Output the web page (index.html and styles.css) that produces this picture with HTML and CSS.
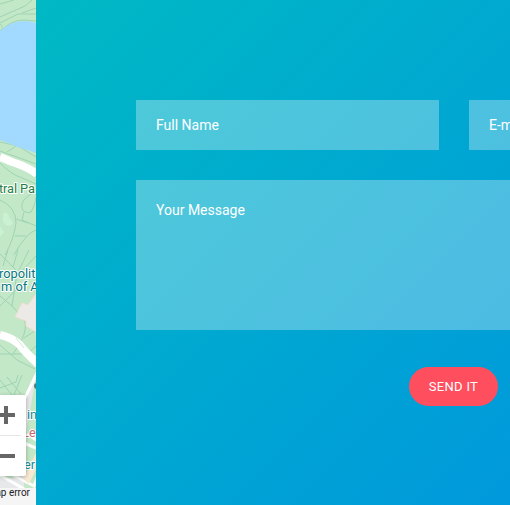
FILE: index.html
```html
<!DOCTYPE html>
<html lang="en">
<head>
<meta charset="utf-8">
<title>Contact</title>
<link rel="stylesheet" href="styles.css">
</head>
<body>
<main class="contact">
  <section class="map">
    <svg class="map-art" viewBox="0 0 36 505" width="36" height="505">
      <rect width="36" height="505" fill="#c3e8c8"/>
      <g fill="none" stroke="#9fd3b3" stroke-width="1">
        <path d="M0 4L14 0M0 17L25 6L32 0M0 23L18 14L36 14M22 13L36 8M0 24Q5 27 0 31"/>
        <path d="M0 32Q10 20 24 20L36 21M0 142L18 146L36 157M7 152L19 144M0 151L36 164M0 163Q12 175 20 177L36 184M0 200Q16 207 16 223Q14 239 5 255M31 194Q20 201 22 208Q24 214 31 212Q36 203 36 197M24 212L22 220L36 226M15 236L26 236M36 230Q26 233 14 255M16 219L28 223"/>
        <path d="M8 250L3 266M18 250L13 267M29 250L17 274L12 306L0 296M36 256L18 275M0 306L18 288M0 254L16 270M12 306L24 319Q28 327 21 342L13 354L0 354M24 338L36 330M0 345L17 360L35 369M13 354L27 354L36 346"/>
        <path d="M0 388L16 382L18 375M0 380L12 395M7 377L21 394M22 375L14 395"/>
      </g>
      <path d="M0 31Q11 21 24 21Q31 21 36 23V153L18 147L0 140Z" fill="#a2daff"/>
      <path d="M0 157L12 162Q28 167 37 174" fill="none" stroke="#fff" stroke-width="8"/>
      <path d="M3 214Q7 210 9 217L13 223Q8 229 3 222ZM0 226L4 232L0 237Z" fill="#c9f2d2"/>
      <path d="M22 303L28 305L36 294V332L26 326V321L15 317Z" fill="#ebeae7" stroke="#f2dccd"/>
      <path d="M0 335Q10 337 19 344Q25 352 38 364" fill="none" stroke="#fff" stroke-width="8"/>
      <path d="M16 338L24 348" stroke="#d6e6d8"/>
      <path d="M36 376L24 405V505H0V478H18Z" fill="#e7e8ea"/>
      <path d="M37 373L24 400M27 434L38 441M24 443L36 448M13 475L34 486L37 478M0 475L36 496" fill="none" stroke="#fff" stroke-width="3"/>
      <path d="M36 453V469L29 484L23 479Z" fill="#f8e9d3"/>
      <path d="M0 488H36V505H0Z" fill="#f5f5f5"/>
      <circle cx="37" cy="386" r="3" fill="#4c7b80"/>
      <g class="place" stroke="#fff" stroke-width="2" paint-order="stroke">
        <text x="-1" y="193" fill="#247d43" textLength="36">tral Pa</text>
        <text x="-1" y="278" fill="#08777d">ropolita</text>
        <text x="1" y="291" fill="#08777d">m of A</text>
        <text x="27" y="419" fill="#148b97">in</text>
        <text x="22" y="437" fill="#c76770">Le</text>
        <text x="24" y="469" fill="#148b97">er</text>
      </g>
    </svg>
    <div class="zoom-control">
      <svg width="26" height="81" viewBox="0 0 26 81">
        <path d="M-3 20H15M6 11V29M-3 61H15" fill="none" stroke="#666" stroke-width="4"/>
        <path d="M0 40.5H21" stroke="#e6e6e6"/>
      </svg>
    </div>
    <span class="map-error">Map error</span>
  </section>
  <form class="panel">
    <div class="fields">
      <div class="field">Full Name</div>
      <div class="field">E-mail</div>
      <div class="field message">Your Message</div>
    </div>
    <button class="send" type="button">SEND IT</button>
  </form>
</main>
</body>
</html>
```
FILE: styles.css
```css
* { box-sizing: border-box; }
body {
  margin: 0;
  overflow: hidden;
  font-family: Roboto, "Liberation Sans", sans-serif;
}
.contact {
  display: flex;
  width: 510px;
  height: 505px;
  overflow: hidden;
}
.map {
  position: relative;
  flex: 0 0 36px;
  overflow: hidden;
}
.map-art { display: block; }
.place { font-size: 12.8px; }
.zoom-control {
  position: absolute;
  left: 0;
  top: 395px;
  width: 26px;
  height: 81px;
  background: #fff;
  border-radius: 0 2px 2px 0;
  box-shadow: 0 1px 4px rgba(0, 0, 0, .3);
}
.zoom-control svg { display: block; }
.map-error {
  position: absolute;
  right: 6px;
  bottom: 6px;
  font-size: 10px;
  line-height: 12px;
  color: #222;
  white-space: nowrap;
}
.panel {
  flex: 0 0 474px;
  display: flex;
  flex-direction: column;
  padding: 100px 0 0 100px;
  overflow: hidden;
  background: linear-gradient(135deg, #00b9c4, #0099dc);
}
.fields {
  display: grid;
  grid-template-columns: 303px 303px;
  grid-template-rows: 50px 150px;
  gap: 30px;
  width: 636px;
}
.field {
  padding: 14px 20px;
  background: rgba(255, 255, 255, .3);
  color: #fff;
  font-size: 14px;
  line-height: 22px;
}
.message {
  grid-column: 1 / -1;
  padding-top: 19px;
}
.send {
  width: 89px;
  height: 39px;
  margin: 37px 0 0 273px;
  padding: 0;
  border: 0;
  border-radius: 20px;
  background: #ff4f5e;
  color: #fff;
  font: 13px/39px Roboto, "Liberation Sans", sans-serif;
  letter-spacing: .3px;
}
```
